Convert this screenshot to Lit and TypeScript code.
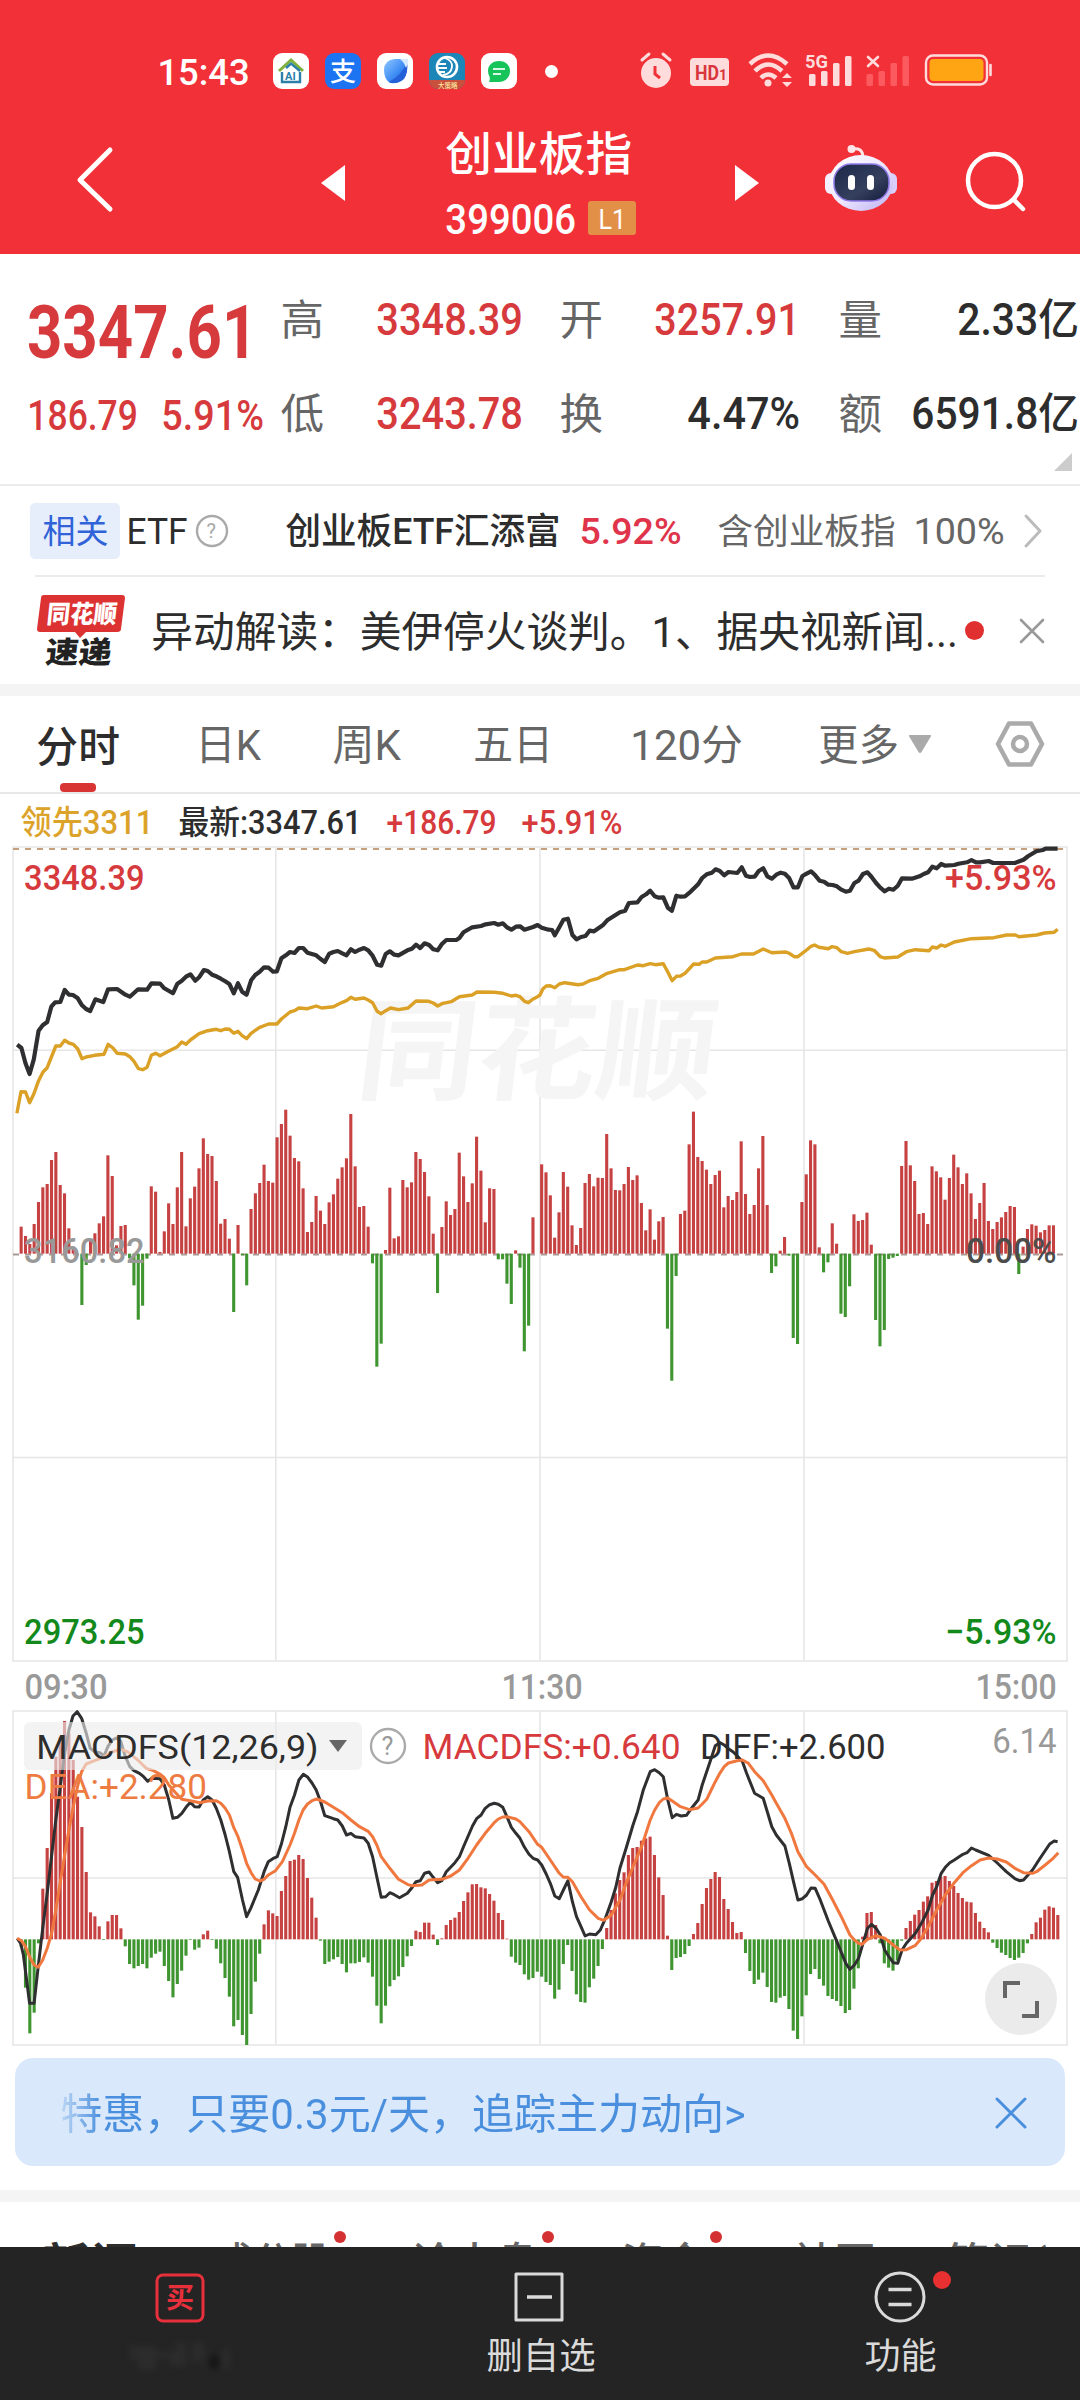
import { LitElement, html, svg, css } from "lit";
import { customElement } from "lit/decorators.js";

/** A run of text set to an exact ink width, vertically centred in its box. */
const fit = (text: string, size: number, width: number, cls = "") => html`
  <svg class="fit ${cls}" width=${width} height=${size} font-size=${size}>
    <text x=${-0.015 * size} y=${0.87 * size} textLength=${width + 0.06 * size} lengthAdjust="spacingAndGlyphs">${text}</text>
  </svg>`;

const label = (text: string, size: number, x: number, baseline: number, width: number, cls: string) => svg`
  <text class=${cls} font-size=${size} x=${x - 0.025 * size} y=${baseline} textLength=${width + 0.07 * size}
    lengthAdjust="spacingAndGlyphs">${text}</text>`;

const PITCH = 4.3375;
const SX = 0.34439;

/* Per-minute momentum levels; BASE is the zero level, smaller is higher. */
const BASE = 461;
const MOMENTUM = [
  380, 408, 432, 372, 306, 262, 252, 180, 156, 255, 280, 385, 440, 461, 615, 495, 420, 400, 370, 349, 166, 228, 436, 378, 375, 475,
  556, 659, 617, 476, 259, 275, 456, 394, 310, 372, 262, 156, 379, 295, 260, 205, 115, 162, 168, 243, 371, 357, 416, 636, 375, 466,
  556, 327, 280, 249, 194, 243, 248, 112, 72, 29, 107, 174, 184, 265, 396, 366, 288, 332, 372, 307, 283, 236, 202, 175, 42, 199, 321,
  318, 380, 490, 800, 731, 450, 263, 415, 409, 240, 262, 247, 156, 177, 216, 289, 401, 579, 381, 304, 345, 327, 158, 229, 306, 250,
  110, 212, 367, 265, 267, 478, 478, 551, 612, 451, 503, 754, 677, 352, 461,
  193, 217, 286, 413, 337, 216, 260, 376, 435, 384, 249, 222, 259, 233, 234, 102, 205, 270, 271, 252, 201, 240, 226, 309, 391, 328,
  419, 364, 351, 686, 842, 528, 342, 332, 133, 35, 171, 183, 209, 252, 225, 212, 322, 288, 300, 276, 124, 282, 342, 315, 205, 108,
  315, 519, 499, 452, 411, 467, 714, 732, 306, 223, 121, 133, 442, 517, 487, 370, 431, 641, 651, 559, 343, 363, 360, 338, 434, 660,
  739, 690, 477, 473, 468, 198, 123, 196, 243, 342, 339, 372, 199, 214, 232, 299, 234, 164, 202, 252, 220, 280, 357, 309, 249, 363,
  387, 366, 352, 336, 318, 321, 522, 440, 387, 373, 377, 397, 390, 376, 376,
];

const MACD_BASE = 1018;
const MACD = [
  1040, 1163, 1300, 1238, 1030, 866, 744, 580, 470, 410, 363, 400, 480, 590, 681, 816, 937, 949, 979, 1020, 964, 945, 945, 985, 1039,
  1092, 1105, 1098, 1092, 1105, 1073, 1061, 1055, 1098, 1143, 1192, 1152, 1112, 1067, 1020, 1049, 1043, 1003, 992, 1020, 1046, 1090,
  1134, 1190, 1279, 1260, 1305, 1335, 1242, 1145, 1061, 973, 931, 940, 948, 873, 828, 783, 779, 765, 777, 834, 893, 953, 1022, 1092,
  1085, 1078, 1071, 1092, 1117, 1090, 1090, 1086, 1072, 1088, 1130, 1217, 1270, 1217, 1159, 1140, 1129, 1101, 1069, 1038, 992, 996,
  968, 968, 1004, 1035, 1015, 975, 960, 953, 936, 903, 877, 853, 852, 862, 865, 882, 902, 939, 960, 1016, 1070, 1088, 1095, 1123,
  1139, 1134, 1115,
  1130, 1146, 1155, 1196, 1169, 1092, 1035, 1113, 1183, 1206, 1208, 1162, 1136, 1098, 1047, 984, 930, 880, 840, 817, 765, 744, 741,
  722, 715, 710, 765, 832, 885, 1007, 1110, 1074, 1071, 1062, 1038, 1002, 969, 912, 864, 837, 816, 831, 897, 927, 966, 999, 996,
  1059, 1113, 1152, 1139, 1118, 1161, 1206, 1208, 1193, 1188, 1227, 1292, 1317, 1249, 1186, 1122, 1107, 1137, 1157, 1188, 1197, 1203,
  1218, 1239, 1230, 1166, 1105, 1010, 939, 936, 975, 1030, 1090, 1103, 1112, 1082, 1022, 984, 963, 944, 930, 905, 889, 848, 843,
  830, 828, 843, 858, 879, 894, 905, 907, 939, 965, 984, 997, 1028, 1044, 1058, 1065, 1074, 1080, 1073, 1059, 1030, 1002, 967, 953,
  929, 919, 923, 945,
];

/* Each trace is split into the morning session and the afternoon session. */
const INDEX_AM = `50,644 62,654 74,700 86,732 98,688 112,602 124,586 137,576 149,530 160,517 175,516 188,480 200,494 212,495 226,505 238,526 250,537 262,543 277,508 289,512 300,516 314,478 340,477 364,494 377,500 401,478 427,479 440,460 465,461 477,475 502,490 515,461 527,453 540,440 553,433 567,452 578,442 592,420 603,423 616,434 628,439 641,446 654,454 666,462 679,490 691,460 703,485 716,494 729,451 741,435 754,425 767,412 780,413 793,425 804,424 817,385 830,376 842,366 855,369 868,354 880,354 893,368 918,376 931,387 943,396 956,371 968,366 981,363 994,370 1006,376 1019,358 1031,366 1044,359 1057,354 1069,361 1082,377 1095,404 1107,407 1120,372 1132,364 1145,374 1157,376 1183,361 1196,356 1208,344 1220,354 1233,340 1246,345 1258,358 1271,361 1283,342 1296,330 1325,330 1334,324 1346,307 1371,292 1397,288 1410,283 1435,279 1447,284 1460,280 1472,292 1485,299 1498,290 1510,289 1523,299 1548,291 1561,285`;
const INDEX_PM = `5,293 25,299 35,300 43,316 56,292 68,269 81,266 94,315 106,328 119,321 132,318 144,302 157,304 182,286 195,271 232,247 247,242 258,219 283,217 295,201 308,193 320,182 333,199 345,203 358,202 371,233 383,242 396,197 408,200 421,199 434,188 459,163 471,144 484,133 499,128 510,118 522,123 535,136 547,126 573,129 586,112 598,137 610,141 623,140 635,123 648,115 660,139 673,146 686,134 699,128 711,131 724,145 736,172 749,172 762,138 774,131 787,124 799,136 812,152 825,155 837,164 850,165 862,169 875,179 888,185 900,182 913,159 925,152 938,132 951,127 963,141 976,159 988,173 1001,184 1013,176 1026,179 1039,167 1051,145 1080,146 1102,139 1114,132 1127,127 1139,110 1152,115 1165,102 1177,107 1203,105 1215,101 1240,97 1253,90 1266,97 1278,97 1303,93 1316,99 1379,99 1404,89 1417,79 1441,64 1460,60 1468,56 1503,56`;
const LEAD_AM = `49,850 61,785 74,786 86,818 98,792 112,752 125,726 137,713 162,648 175,648 188,631 200,639 213,643 226,657 238,686 250,681 275,676 302,673 314,643 328,654 340,670 364,672 377,680 389,694 402,716 414,719 427,712 440,675 452,670 465,677 490,663 515,650 528,636 540,643 553,630 578,611 603,602 628,598 641,602 654,597 666,598 679,610 691,604 703,617 716,626 729,610 754,592 780,582 804,582 817,567 842,546 855,542 868,534 893,536 918,528 934,534 968,530 994,517 1006,512 1019,502 1031,508 1057,504 1069,510 1082,518 1095,544 1107,551 1120,542 1134,534 1157,539 1185,534 1208,513 1245,514 1258,519 1271,528 1283,521 1310,515 1334,500 1371,495 1385,486 1435,487 1460,490 1485,498 1498,496 1510,500 1523,514 1534,518 1548,507 1561,500`;
const LEAD_PM = `0,495 8,477 18,468 30,467 43,473 56,462 72,458 110,464 125,462 144,452 169,445 195,430 232,419 245,419 283,405 300,407 320,401 335,404 358,401 371,426 384,452 396,439 408,438 421,430 446,402 462,403 471,396 484,396 509,384 560,380 585,372 620,372 648,357 673,368 714,366 724,370 738,380 749,380 774,360 787,349 797,345 810,352 837,356 847,350 862,353 875,365 893,370 913,365 955,357 970,361 988,380 1000,384 1039,381 1064,365 1090,359 1130,362 1139,351 1152,354 1165,345 1177,349 1203,336 1253,326 1318,323 1355,315 1380,315 1391,320 1442,315 1465,309 1493,307 1503,298`;
const DIFF_AM = `50,1015 60,1030 68,1065 86,1210 99,1210 111,1100 124,985 137,880 162,660 175,560 187,465 200,390 212,348 224,335 237,355 250,398 262,445 275,455 290,458 302,468 313,440 326,420 338,414 350,422 364,470 377,500 389,512 405,520 417,530 429,544 441,535 464,536 477,555 490,600 502,655 515,652 528,640 540,622 553,607 565,620 578,621 590,600 603,590 616,600 628,625 641,660 654,705 666,755 679,815 690,832 704,900 716,950 728,925 750,870 767,815 779,785 792,776 805,770 817,732 830,680 842,622 855,585 868,540 881,523 893,531 906,549 918,570 931,605 943,647 968,656 981,660 994,678 1006,705 1019,700 1031,710 1057,714 1069,730 1082,770 1094,830 1107,892 1120,890 1132,878 1145,884 1160,893 1183,880 1195,865 1208,845 1220,842 1233,820 1246,816 1258,832 1271,848 1283,842 1296,815 1321,788 1334,770 1346,740 1372,678 1384,656 1397,645 1409,625 1422,614 1435,610 1447,613 1460,622 1472,650 1485,682 1498,700 1510,715 1523,742 1536,763 1548,775 1561,780`;
const DIFF_PM = `5,795 18,822 30,850 43,888 56,896 68,870 81,842 94,905 106,950 119,980 131,1008 144,1002 162,1004 175,990 190,955 207,905 220,862 232,805 250,745 270,675 283,635 300,570 320,515 333,509 346,518 358,530 371,600 384,653 396,643 410,648 425,646 440,625 459,600 471,555 497,475 509,437 522,428 535,435 547,446 560,455 573,468 588,485 600,520 623,580 648,595 660,635 673,680 686,705 711,738 724,790 736,845 749,900 762,896 774,885 787,864 799,865 812,895 837,963 862,1025 888,1090 900,1108 913,1095 925,1075 938,1030 951,985 963,973 976,985 988,1005 1001,1050 1013,1070 1026,1088 1039,1090 1051,1050 1064,1030 1077,1015 1090,1000 1110,965 1127,930 1140,885 1152,860 1165,820 1177,802 1190,788 1203,780 1228,763 1240,758 1253,744 1265,750 1303,766 1328,789 1354,815 1379,836 1392,842 1404,840 1430,810 1450,778 1480,732 1493,723 1503,725`;
const DEA_AM = `50,1015 62,1022 74,1040 86,1070 99,1095 111,1102 124,1080 137,1045 150,1000 162,930 187,770 200,690 212,625 225,560 237,515 250,492 275,482 300,472 326,455 351,448 370,455 400,480 425,505 445,512 464,522 477,533 490,555 510,578 528,598 553,602 580,608 603,603 628,602 641,610 654,625 666,645 679,683 691,710 704,750 716,790 729,818 741,837 754,843 767,838 779,825 800,812 820,785 842,735 855,700 868,660 880,630 893,612 906,602 920,597 943,606 968,622 994,638 1019,660 1044,680 1069,694 1082,710 1094,735 1107,770 1132,805 1157,838 1183,853 1195,857 1225,855 1246,840 1283,838 1309,828 1334,810 1359,775 1384,735 1409,700 1435,668 1447,657 1460,651 1472,650 1498,657 1510,665 1536,695 1561,733`;
const DEA_PM = `5,742 30,780 56,820 68,832 81,832 94,845 119,890 144,930 169,955 185,961 207,945 232,900 250,850 270,800 295,740 320,660 333,630 346,608 358,597 371,594 383,602 408,620 434,629 459,624 471,612 484,598 497,570 509,545 522,520 535,500 547,489 573,482 588,480 605,490 623,515 648,542 673,585 686,610 711,655 730,700 749,755 774,800 799,825 825,853 850,900 875,950 900,1005 913,1020 925,1030 935,1033 951,1018 976,1007 1001,1015 1026,1035 1045,1050 1064,1049 1089,1037 1105,1018 1127,980 1152,930 1177,885 1203,848 1228,818 1253,797 1278,780 1303,774 1328,777 1354,786 1379,805 1404,818 1430,820 1442,815 1467,795 1490,775 1505,758`;

const trace = (am: string, pm: string, top: number) => {
  const read = (s: string, dx: number) =>
    s.split(" ").map((p) => {
      const [x, y] = p.split(",").map(Number);
      return `${(x * SX + dx).toFixed(1)},${(y / 3 + top).toFixed(1)}`;
    });
  return [...read(am, 0), ...read(pm, 540)].join(" ");
};

const columns = (data: number[], base: number, top: number) =>
  data.map((v, i) => {
    const x = 21.2 + i * PITCH - 1.6;
    const h = Math.abs(v - base) / 3;
    return svg`<rect class=${v <= base ? "up" : "down"} x=${x} y=${top + Math.min(v, base) / 3} width="3.1" height=${h}></rect>`;
  });

const SIGNAL = [0, 1, 2, 3];

@customElement("app-root")
export class AppRoot extends LitElement {
  static styles = css`
    :host { display: block; width: 1080px; height: 2400px; overflow: hidden; background: #fff; color: #2d2d2d;
      font-family: Roboto, "Noto Sans CJK SC", sans-serif; font-weight: 500; }
    * { box-sizing: border-box; }
    svg { display: block; overflow: visible; flex: none; fill: currentColor; }
    .line { fill: none; stroke: currentColor; stroke-linecap: round; stroke-linejoin: round; }
    .r { font-weight: 400; }
    .b { font-weight: 700; }
    .red { color: #d63a3c; fill: #d63a3c; }
    .grey { color: #666; fill: #666; }
    .dim { color: #999; fill: #999; }
    .ink { color: #2d2d2d; fill: #2d2d2d; }
    .soft { fill: #4c4c4c; }
    .green { fill: #12891a; }
    .gold { color: #dca32a; }
    .orange { fill: #ee7c42; }

    .top { background: #f23037; color: #fff; height: 254px; }
    .status { display: flex; align-items: center; height: 122px; padding: 20px 0 0 158px; }
    .apps { display: flex; gap: 16px; margin-left: 25px; }
    .bullet { width: 13px; height: 13px; border-radius: 50%; background: #fff; margin-left: 28px; }
    .system { margin-left: 82px; color: #ffdcdc; }
    .head { display: grid; grid-template-columns: 244px 125px 289px 90px 140px 60px; padding-left: 77px; height: 132px; align-items: start; }
    .back { margin-top: 26px; }
    .step { margin-top: 43px; }
    .name { padding-top: 8px; }
    .code { display: flex; align-items: center; gap: 14px; margin-top: 25px; height: 34px; }
    .level { background: #e29048; width: 48px; height: 34px; border-radius: 3px; display: flex; align-items: center; justify-content: center; }
    .robot { margin-top: 22px; }
    .search { margin-top: 30px; }

    .quote { height: 232px; border-bottom: 2px solid #ebebeb; display: grid; grid-template-columns: 281px 799px; position: relative; }
    .last { padding: 40px 0 0 28px; }
    .change { display: flex; gap: 26px; margin-top: 25px; }
    .stats { display: grid; grid-template-columns: 42px 198px 39px 42px 196px 41px 42px 196px; grid-auto-rows: 94px; align-items: center; padding-top: 18px; }
    .stats .v { justify-self: end; }
    .fold { position: absolute; right: 8px; bottom: 13px; color: #ccc; }

    .etf { margin: 0 35px; height: 91px; border-bottom: 2px solid #ebebeb; display: flex; align-items: center; }
    .tag { width: 90px; height: 56px; border-radius: 5px; background: #e6eefc; color: #3062d8; display: flex; align-items: center; justify-content: center; margin: 0 7px 0 -5px; }
    .help { margin-left: 10px; color: #aaa; }
    .fund { margin-left: 58px; }
    .pct { margin-left: 21px; color: #e0344b; }
    .share { margin-left: 38px; }
    .full { margin-left: 20px; }
    .more { margin-left: 21px; color: #bbb; }

    .news { height: 107px; display: flex; align-items: center; padding-left: 37px; }
    .news .logo { margin-right: 27px; }
    .news .dot { margin-left: 9px; }
    .dot { border-radius: 50%; background: #e03030; width: 19px; height: 19px; }
    .close { margin-left: 36px; color: #999; }
    .band { height: 12px; background: #f4f4f4; }

    .tabs { height: 98px; border-bottom: 2px solid #e8e8e8; display: grid; align-items: center; padding-left: 37px;
      grid-template-columns: 159px 137px 141px 157px 188px 90px 87px 48px; }
    .tab { height: 96px; display: flex; flex-direction: column; justify-content: flex-end; gap: 16px; }
    .bar { width: 36px; height: 9px; border-radius: 4px; background: #d93434; margin-left: 23px; }
    .caret { color: #aaa; }
    .info { height: 52px; display: flex; align-items: center; padding: 5px 0 0 21px; gap: 27px; }

    .grid { fill: none; stroke: #e6e6e6; stroke-width: 1.6; }
    .dash { fill: none; stroke-width: 2; stroke-dasharray: 6 6; }
    .up { fill: #c64141; }
    .down { fill: #3f9530; }
    .wm { fill: #f5f5f5; font-weight: 700; font-family: "Noto Sans CJK SC", sans-serif; }
    .index { fill: none; stroke: #2f2f31; stroke-width: 4.2; stroke-linejoin: round; }
    .lead { fill: none; stroke: #dba026; stroke-width: 3.4; stroke-linejoin: round; }
    .diff { fill: none; stroke: #2f2f31; stroke-width: 3; stroke-linejoin: round; }
    .dea { fill: none; stroke: #f0783f; stroke-width: 3; stroke-linejoin: round; }
    .chip { fill: #ebebeb; fill-opacity: 0.62; }
    .ring { fill: none; stroke: #aaa; stroke-width: 2.4; }
    .times { height: 49px; display: flex; justify-content: space-between; align-items: center; padding: 1px 25px 0; }

    .promo { margin: 13px 15px 0; height: 108px; border-radius: 18px; background: #d9e8fa; color: #4a8fde; display: flex; align-items: center;
      padding: 2px 39px 0 46px; justify-content: space-between; }
    .promo .fit { -webkit-mask-image: linear-gradient(90deg, rgba(0,0,0,.2), #000 40px); mask-image: linear-gradient(90deg, rgba(0,0,0,.2), #000 40px); }
    .gap { margin-top: 24px; }
    .sections { height: 45px; overflow: hidden; display: grid; padding: 38px 0 0 43px; grid-template-columns: 172px 197px 210px 171px 154px 132px; align-items: start; }
    .section { display: flex; align-items: flex-start; gap: 6px; height: 42px; }
    .section .fit { margin-top: 1px; }
    .pin { width: 12px; height: 12px; border-radius: 50%; background: #d43232; flex: none; margin: -9px 0 0 0; }
    .nav { height: 153px; background: #242424; color: #dadada; display: grid; grid-template-columns: 360px 360px 360px; position: relative; }
    .item { display: flex; flex-direction: column; align-items: center; padding-top: 25px; gap: 16px; }
    .item:first-child { padding-right: 1px; }
    .buy { color: #e8303c; }
    .ghost { filter: blur(3px); color: #2c2c2c; }
  `;

  private apps() {
    return html`
      <div class="apps">
        <svg width="36" height="36">
          <rect width="36" height="36" rx="9" fill="#fff"></rect>
          <path d="M6 18 18 7 30 18" fill="none" stroke="#7fb23c" stroke-width="3"></path>
          <path d="M9 19V29H27V19M13 15 18 10.500 27 18" fill="none" stroke="#2b7fa8" stroke-width="2.400"></path>
          <text x="12" y="27" font-size="11" font-weight="700" fill="#2b7fa8">AI</text>
        </svg>
        <svg width="36" height="36">
          <rect width="36" height="36" rx="9" fill="#1d74f2"></rect>
          <text x="5" y="28" font-size="26" fill="#fff">支</text>
        </svg>
        <svg width="36" height="36">
          <defs><linearGradient id="ball" x1="0" y1="0" x2="1" y2="1">
            <stop offset="0" stop-color="#8fc8ff"></stop><stop offset=".55" stop-color="#3f8df5"></stop><stop offset="1" stop-color="#1b4fc4"></stop>
          </linearGradient></defs>
          <rect width="36" height="36" rx="9" fill="#fff"></rect>
          <path d="M7 17Q7 7 18 6H29Q31 6 30 9 31 20 27 26 22 31 13 30 7 26 7 17Z" fill="url(#ball)"></path>
          <path d="M12 29Q25 22 30 9 32 24 22 29 17 31 12 29Z" fill="#2460d8"></path>
          <path d="M23 6H31Q32 8 29 15 27 9 23 6Z" fill="#d5e9ff"></path>
        </svg>
        <svg width="36" height="36">
          <rect width="36" height="36" rx="9" fill="#1d86b8"></rect>
          <path d="M0 27H36A9 9 0 0 1 27 36H9A9 9 0 0 1 0 27Z" fill="#c8503c"></path>
          <circle cx="18" cy="14" r="10" fill="none" stroke="#fff" stroke-width="2.600"></circle>
          <path d="M16 5Q24 8 23 14 22 21 14 22M9 11H17M9 15H18M10 19H16" fill="none" stroke="#fff" stroke-width="1.800"></path>
          <text x="9" y="34.500" font-size="6.500" fill="#ffe6a0">大策略</text>
        </svg>
        <svg width="36" height="36">
          <rect width="36" height="36" rx="9" fill="#fff"></rect>
          <path d="M18 8C25 8 29 12.500 29 18S25 29 18 29H8Q9.500 26 8.500 23.500 7 21 7 18C7 12.500 11 8 18 8Z" fill="#16c45a"></path>
          <path d="M12 16H24M12 21H20" stroke="#d8f7e4" stroke-width="2"></path>
        </svg>
      </div>`;
  }

  private system() {
    return html`
      <svg class="system" width="353" height="36">
        <circle cx="16" cy="20" r="15"></circle>
        <path class="line" stroke-width="3" d="M2 7 9 1M30 7 23 1"></path>
        <path d="M15 13V21L20 25" fill="none" stroke="#f23037" stroke-width="3"></path>
        <rect x="50" y="5" width="39" height="28" rx="4"></rect>
        <text x="55" y="27" font-size="21" font-weight="700" fill="#d8363c" textLength="24" lengthAdjust="spacingAndGlyphs">HD</text>
        <text x="79" y="27" font-size="14" font-weight="700" fill="#d8363c">1</text>
        <g class="line" stroke-width="4.500">
          <path d="M110 11Q128-6 147 11" stroke-linecap="butt"></path>
          <path d="M115 18Q128 5 142 18" stroke-linecap="butt"></path>
          <path d="M121 25Q128 18 136 25" stroke-linecap="butt"></path>
        </g>
        <circle cx="128" cy="30" r="3.500"></circle>
        <path d="M142 25 147 20 152 25ZM142 29 147 34 152 29Z"></path>
        <text x="165" y="15" font-size="19" font-weight="700" textLength="23" lengthAdjust="spacingAndGlyphs">5G</text>
        ${SIGNAL.map((i) => svg`
          <rect x=${169 + i * 12} y=${[21, 18, 10, 3][i]} width="6.500" height=${[12, 15, 23, 30][i]} rx="1.500"></rect>
          <rect x=${226.5 + i * 12} y=${[21, 18, 10, 3][i]} width="6.500" height=${[12, 15, 23, 30][i]} rx="1.500" fill="#fb5a5f"></rect>`)}
        <path class="line" stroke-width="2.600" stroke-linecap="butt" d="M228 4 238 13M238 4 228 13"></path>
        <rect x="286" y="2.500" width="61" height="29" rx="7" fill="none" stroke="currentColor" stroke-width="2.400"></rect>
        <rect x="289.500" y="6" width="54" height="22" rx="4" fill="#ffa413"></rect>
        <path class="line" stroke-width="2.600" d="M350.500 12V22"></path>
      </svg>`;
  }

  private header() {
    return html`
      <div class="top">
        <div class="status">${fit("15:43", 36.5, 90)}${this.apps()}<div class="bullet"></div>${this.system()}</div>
        <div class="head">
          <svg class="back" width="36" height="64"><path class="line" stroke-width="5" d="M33 2 3 32 33 61"></path></svg>
          <svg class="step" width="24" height="36"><path d="M0 18 24 0V36Z"></path></svg>
          <div class="name">
            ${fit("创业板指", 46, 184)}
            <div class="code">${fit("399006", 42, 128)}<div class="level">${fit("L1", 27, 26, "r")}</div></div>
          </div>
          <svg class="step" width="24" height="36"><path d="M24 18 0 0V36Z"></path></svg>
          <svg class="robot" width="74" height="68">
            <defs>
              <linearGradient id="shell" x1="0" y1="0" x2="1" y2="1">
                <stop offset="0" stop-color="#ffffff"></stop><stop offset=".5" stop-color="#efe8ff"></stop><stop offset="1" stop-color="#b9aef2"></stop>
              </linearGradient>
              <linearGradient id="visor" x1="0" y1="0" x2="1" y2="1">
                <stop offset="0" stop-color="#1b2748"></stop><stop offset=".6" stop-color="#35405f"></stop><stop offset="1" stop-color="#141a3a"></stop>
              </linearGradient>
            </defs>
            <path d="M27 5Q37 3 38 12" fill="none" stroke="#ffe4e8" stroke-width="3"></path>
            <circle cx="26.500" cy="5" r="4" fill="#ffe4e8"></circle>
            <rect x="0" y="29" width="12" height="21" rx="6" fill="#f3efff"></rect>
            <rect x="60" y="29" width="12" height="21" rx="6" fill="#d9cffa"></rect>
            <ellipse cx="36" cy="39" rx="32" ry="28" fill="url(#shell)"></ellipse>
            <rect x="9" y="20" width="55" height="37" rx="17" fill="url(#visor)" stroke="#8f7ae8" stroke-width="1.500"></rect>
            <rect x="23" y="31" width="7" height="15" rx="3.500" fill="#fff"></rect>
            <rect x="42" y="31" width="7" height="15" rx="3.500" fill="#fff"></rect>
          </svg>
          <svg class="search" width="60" height="60"><circle class="line" stroke-width="4.500" cx="29.500" cy="28.500" r="26.500"></circle><path class="line" stroke-width="4.500" d="M49 48 58 57"></path></svg>
        </div>
      </div>`;
  }

  private quote() {
    return html`
      <div class="quote">
        <div class="last red">
          ${fit("3347.61", 74, 226, "b")}
          <div class="change">${fit("186.79", 42, 108)}${fit("5.91%", 42, 100)}</div>
        </div>
        <div class="stats">
          ${fit("高", 42, 41, "r grey")}<div class="v">${fit("3348.39", 43.5, 144, "red")}</div><i></i>
          ${fit("开", 42, 41, "r grey")}<div class="v">${fit("3257.91", 43.5, 143, "red")}</div><i></i>
          ${fit("量", 42, 41, "r grey")}<div class="v">${fit("2.33亿", 43.5, 119)}</div>
          ${fit("低", 42, 41, "r grey")}<div class="v">${fit("3243.78", 43.5, 144, "red")}</div><i></i>
          ${fit("换", 42, 41, "r grey")}<div class="v">${fit("4.47%", 43.5, 110)}</div><i></i>
          ${fit("额", 42, 41, "r grey")}<div class="v">${fit("6591.8亿", 43.5, 165)}</div>
        </div>
        <svg class="fold" width="18" height="18"><path d="M18 0V18H0Z"></path></svg>
      </div>
      <div class="etf">
        <div class="tag">${fit("相关", 33, 64, "r")}</div>
        ${fit("ETF", 36, 59, "r")}
        <svg class="help" width="32" height="32"><circle class="ring" cx="16" cy="16" r="15"></circle><text class="r" x="10.500" y="23" font-size="20">?</text></svg>
        <div class="fund">${fit("创业板ETF汇添富", 36, 273)}</div>
        <div class="pct">${fit("5.92%", 37, 100)}</div>
        <div class="share">${fit("含创业板指", 35.5, 176, "r grey")}</div>
        <div class="full">${fit("100%", 37, 89, "r grey")}</div>
        <svg class="more" width="18" height="32"><path class="line" stroke-width="3" d="M2 1 16 16 2 31"></path></svg>
      </div>
      <div class="news">
        <svg class="logo" width="88" height="72">
          <path d="M7 0H85Q88 0 88 3L84 34Q84 37 80 37H49L43 43 38 37H3Q0 37 0 34L4 3Q4 0 7 0Z" fill="#dc3232"></path>
          <g transform="skewX(-6)" font-weight="900">
            <text x="12" y="28" font-size="25" fill="#fff" textLength="70" lengthAdjust="spacingAndGlyphs">同花顺</text>
            <text x="15" y="68" font-size="30" fill="#222" textLength="66" lengthAdjust="spacingAndGlyphs">速递</text>
          </g>
        </svg>
        ${fit("异动解读：美伊停火谈判。1、据央视新闻...", 42, 804, "r")}
        <div class="dot"></div>
        <svg class="close" width="24" height="24"><path class="line" stroke-width="2.600" d="M1 1 23 23M23 1 1 23"></path></svg>
      </div>
      <div class="band"></div>`;
  }

  private tabs() {
    return html`
      <div class="tabs">
        <div class="tab">${fit("分时", 42, 81)}<div class="bar"></div></div>
        ${fit("日K", 42, 63, "r grey")}${fit("周K", 42, 66, "r grey")}${fit("五日", 42, 77, "r grey")}
        ${fit("120分", 42, 110, "r grey")}${fit("更多", 42, 78, "r grey")}
        <svg class="caret" width="22" height="18"><path d="M1 0H21Q23 0 21.500 2L12.500 17Q11 19 9.500 17L.5 2Q-1 0 1 0Z"></path></svg>
        <svg class="caret" width="48" height="46">
          <path class="line" stroke-width="4.500" d="M13 2.500H35L46 23 35 43.500H13L2 23Z"></path>
          <circle class="line" stroke-width="4.500" cx="24" cy="23" r="7"></circle>
        </svg>
      </div>
      <div class="info">
        ${fit("领先3311", 32.5, 131, "gold")}${fit("最新:3347.61", 32.5, 181)}
        ${fit("+186.79", 32.5, 108, "red")}${fit("+5.91%", 32.5, 99, "red")}
      </div>`;
  }

  private chart() {
    return html`
      <svg class="plot" width="1080" height="815" viewBox="0 846 1080 815">
        <path class="grid" d="M13 847H1067V1661H13ZM275.800 847V1661M540 847V1661M804 847V1661M13 1050.300H1067M13 1457.500H1067"></path>
        <g transform="translate(366 0) skewX(-7)">
          <text class="wm" font-size="112" x="122" y="1091" textLength="358" lengthAdjust="spacingAndGlyphs">同花顺</text>
        </g>
        <path class="dash" stroke="#c4a07c" d="M13 849H1067"></path>
        <path class="dash" stroke="#a99a98" d="M13 1254.500H1063"></path>
        ${columns(MOMENTUM, BASE, 1100)}
        <polyline class="lead" points=${trace(LEAD_AM, LEAD_PM, 830)}></polyline>
        <polyline class="index" points=${trace(INDEX_AM, INDEX_PM, 830)}></polyline>
        ${label("3348.39", 35.5, 25, 890, 118, "red")}
        ${label("+5.93%", 35.5, 946, 890, 109, "red")}
        ${label("3160.82", 35.5, 25, 1262.5, 118, "dim")}
        ${label("0.00%", 35.5, 967, 1262.5, 88, "soft")}
        ${label("2973.25", 35.5, 25, 1644, 118, "green")}
        ${label("−5.93%", 35.5, 946, 1644, 109, "green")}
      </svg>
      <div class="times">${fit("09:30", 35.5, 81, "dim")}${fit("11:30", 35.5, 79, "dim")}${fit("15:00", 35.5, 79, "dim")}</div>
      <svg class="plot" width="1080" height="335" viewBox="0 1710 1080 335">
        <path class="grid" d="M13 1711H1067V2045H13ZM275.800 1711V2045M540 1711V2045M804 1711V2045M13 1878H1067"></path>
        ${columns(MACD, MACD_BASE, 1600)}
        <polyline class="diff" points=${trace(DIFF_AM, DIFF_PM, 1600)}></polyline>
        <polyline class="dea" points=${trace(DEA_AM, DEA_PM, 1600)}></polyline>
        <rect class="chip" x="24" y="1722" width="338" height="48" rx="6"></rect>
        ${label("MACDFS(12,26,9)", 34, 37, 1759, 280, "ink r")}
        <path fill="#666" d="M329 1740H347L338 1752Z"></path>
        <circle class="ring" cx="388" cy="1746" r="17"></circle>
        <text class="dim r" x="381.500" y="1755" font-size="25">?</text>
        ${label("MACDFS:+0.640", 34.5, 423.5, 1759, 255.5, "red r")}
        ${label("DIFF:+2.600", 34.5, 701, 1759, 183, "ink r")}
        ${label("DEA:+2.280", 34.5, 25.5, 1799, 180, "orange r")}
        ${label("6.14", 34.5, 993, 1753, 62, "dim r")}
        <circle cx="1021" cy="1999" r="36" fill="#ebebeb"></circle>
        <path d="M1005 1998V1983H1020M1037 2001V2016H1022" fill="none" stroke="#666" stroke-width="4"></path>
      </svg>`;
  }

  private section(text: string, width: number, pin: boolean, first = false) {
    return html`<div class="section">${fit(text, first ? 46 : 41, width, first ? "b" : "grey")}${pin ? html`<div class="pin"></div>` : ""}</div>`;
  }

  render() {
    return html`
      ${this.header()}${this.quote()}${this.tabs()}${this.chart()}
      <div class="promo">
        ${fit("特惠，只要0.3元/天，追踪主力动向>", 42, 683, "r")}
        <svg width="30" height="30"><path class="line" stroke-width="3" d="M1 1 29 29M29 1 1 29"></path></svg>
      </div>
      <div class="band gap"></div>
      <div class="sections">
        ${this.section("新闻", 93, false, true)}${this.section("成分股", 113, true)}${this.section("论大盘", 124, true)}
        ${this.section("资金", 82, true)}${this.section("社区", 81, false)}${this.section("笔记(", 98, false)}
      </div>
      <div class="nav">
        <div class="item">
          <svg class="buy" width="50" height="50">
            <rect class="line" stroke-width="3" x="2" y="3" width="46" height="46" rx="6"></rect>
            <text class="b" x="11" y="36" font-size="28">买</text>
          </svg>
          <svg class="ghost" width="108" height="36"><path d="M4 8H30V14H50V4H60V28H44V20H30V32H12V22H4ZM66 4H78V14L90 20 104 8V30H78V20L66 26Z"></path><circle cx="88" cy="24" r="7" fill="#161616"></circle></svg>
        </div>
        <div class="item">
          <svg width="50" height="50"><rect class="line" stroke-width="3" x="1" y="2" width="46" height="46"></rect><path d="M12 25H37" stroke="currentColor" stroke-width="3.500"></path></svg>
          ${fit("删自选", 36, 107, "r")}
        </div>
        <div class="item">
          <svg width="50" height="50">
            <circle class="line" stroke-width="3" cx="25" cy="25" r="24"></circle>
            <path d="M13.500 17.500H36.500M13.500 32.500H36.500" stroke="currentColor" stroke-width="3.500"></path>
            <circle cx="67" cy="8" r="9" fill="#e83030"></circle>
          </svg>
          ${fit("功能", 36, 70, "r")}
        </div>
      </div>`;
  }
}
